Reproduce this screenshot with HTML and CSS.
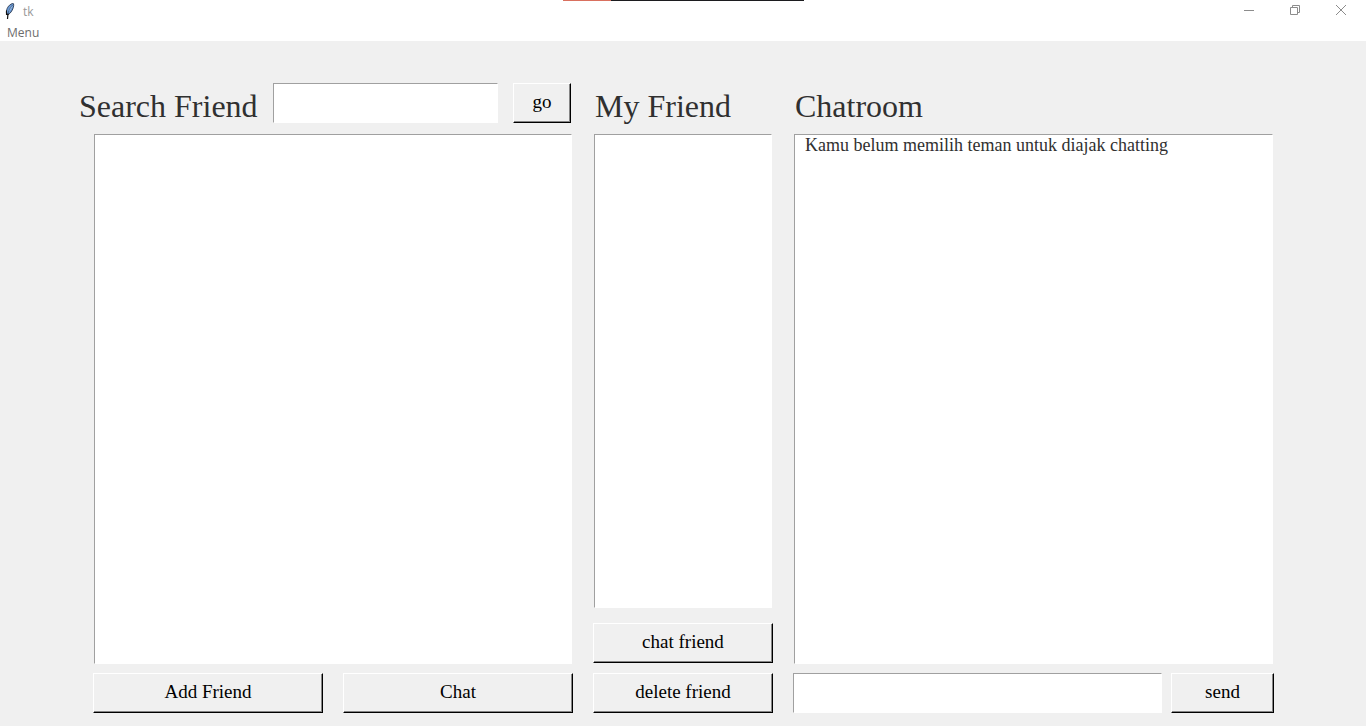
FILE: index.html
```html
<!DOCTYPE html>
<html lang="id">
<head>
<meta charset="utf-8">
<title>tk</title>
<link rel="stylesheet" href="styles.css">
</head>
<body>
<div class="window">
  <div class="top-strip"></div>
  <header class="titlebar">
    <svg class="feather" width="12" height="18" viewBox="0 0 12 18" aria-hidden="true">
      <path d="M3 13C1.500 9.500 3 5.500 5.500 3.200C7.500 1.500 9.300 1.200 9.600 1.800C10 4 9 7.500 7 10C5.800 11.800 4.500 12.500 3 13Z" fill="#6c9bd6" stroke="#26364f" stroke-width="0.900"/>
      <path d="M8 4L5 9" stroke="#a9caef" stroke-width="1.300"/>
      <path d="M8.500 3C6 6 4.500 9 3.800 12" fill="none" stroke="#2c3c55" stroke-width="0.600"/>
      <path d="M4 11.500L3.500 17" fill="none" stroke="#111" stroke-width="1.200"/>
      <path d="M2.500 8.500V12.500H4.500" fill="none" stroke="#111" stroke-width="1.100"/>
    </svg>
    <span class="title">tk</span>
    <div class="controls">
      <button class="control" type="button" aria-label="Minimize"><svg width="12" height="12" viewBox="0 0 12 12"><path d="M1 6.500H11"/></svg></button>
      <button class="control" type="button" aria-label="Restore"><svg width="12" height="12" viewBox="0 0 12 12"><path d="M1.500 3.500H8.500V10.500H1.500ZM3.500 3.500V1.500H10.500V8.500H8.500"/></svg></button>
      <button class="control" type="button" aria-label="Close"><svg width="12" height="12" viewBox="0 0 12 12"><path d="M1 1L11 11M11 1L1 11"/></svg></button>
    </div>
  </header>
  <nav class="menubar"><button class="menu" type="button">Menu</button></nav>

  <main class="content">
    <section class="column">
      <div class="head search">
        <label class="heading" for="search">Search Friend</label>
        <input class="field" id="search" type="text">
        <button class="btn go" type="button">go</button>
      </div>
      <div class="list"></div>
      <div class="actions pair">
        <button class="btn" type="button">Add Friend</button>
        <button class="btn" type="button">Chat</button>
      </div>
    </section>

    <section class="column">
      <div class="head"><h2 class="heading">My Friend</h2></div>
      <div class="list"></div>
      <div class="actions stack">
        <button class="btn" type="button">chat friend</button>
        <button class="btn" type="button">delete friend</button>
      </div>
    </section>

    <section class="column">
      <div class="head"><h2 class="heading">Chatroom</h2></div>
      <div class="list"><p class="message">Kamu belum memilih teman untuk diajak chatting</p></div>
      <div class="actions compose">
        <input class="field" type="text" aria-label="Chat message">
        <button class="btn send" type="button">send</button>
      </div>
    </section>
  </main>
</div>
</body>
</html>
```
FILE: styles.css
```css
* {
  box-sizing: border-box;
}

body {
  margin: 0;
  background: #f0f0f0;
  color: #303030;
  font-family: "Liberation Serif", "Times New Roman", serif;
}

.window {
  position: relative;
  display: flex;
  flex-direction: column;
  min-height: 100vh;
}

.top-strip {
  position: absolute;
  top: 0;
  left: 563px;
  width: 241px;
  height: 1px;
  background: linear-gradient(to right, #d9705f 20%, #1c1c1f 20%);
}

.titlebar {
  display: flex;
  align-items: center;
  height: 22px;
  padding-left: 4px;
  background: #fff;
  font: 12px/22px "Open Sans", sans-serif;
  color: #999;
}

.feather {
  margin-right: 7px;
}

.title {
  padding-top: 2px;
}

.controls {
  display: flex;
  align-self: flex-start;
  margin-left: auto;
  padding-right: 2px;
}

.control {
  display: grid;
  place-items: center;
  width: 46px;
  height: 20px;
  padding: 0;
  border: 0;
  background: none;
}

.control svg {
  fill: none;
  stroke: #8c8c8c;
  stroke-width: 1;
}

.menubar {
  height: 19px;
  padding-left: 7px;
  background: #fff;
}

.menu {
  display: block;
  padding: 0;
  border: 0;
  background: none;
  font: 12px/22px "Open Sans", sans-serif;
  color: #6d6d6d;
}

.content {
  flex: 1;
  display: grid;
  grid-template-columns: 480fr 180fr 481fr;
  gap: 20px;
  padding: 42px 92px 13px 93px;
}

.column {
  display: flex;
  flex-direction: column;
  min-width: 0;
}

.head {
  display: flex;
  align-items: center;
  height: 40px;
  margin-bottom: 11px;
  padding: 0 2px;
}

.search {
  gap: 15px;
  margin-left: -16px;
}

.heading {
  margin: 0;
  padding-top: 5px;
  font-size: 32px;
  line-height: 36px;
  font-weight: 400;
  white-space: nowrap;
}

.list {
  flex: 1;
  margin: 0 1px;
  border: 1px solid #fff;
  border-top-color: #a0a0a0;
  border-left-color: #a0a0a0;
  background: #fff;
}

.message {
  margin: 0;
  padding-left: 10px;
  font-size: 18px;
  line-height: 20px;
}

.field {
  flex: 1;
  min-width: 0;
  height: 40px;
  padding: 0 4px;
  border: 1px solid #fff;
  border-top-color: #a0a0a0;
  border-left-color: #a0a0a0;
  background: #fff;
  font: 18px "Liberation Serif", "Times New Roman", serif;
}

.btn {
  height: 40px;
  padding: 0 0 2px;
  border: 1px solid #000;
  border-top-color: #fff;
  border-left-color: #fff;
  background: #f0f0f0;
  box-shadow: inset -1px -1px #858585;
  color: #000;
  font: 19px "Liberation Serif", "Times New Roman", serif;
}

.go {
  width: 58px;
}

.send {
  width: 103px;
}

.actions {
  display: grid;
  margin-top: 9px;
}

.pair {
  grid-template-columns: 1fr 1fr;
  gap: 20px;
}

.stack {
  gap: 10px;
  margin-top: 15px;
}

.compose {
  display: flex;
  gap: 9px;
}
```
